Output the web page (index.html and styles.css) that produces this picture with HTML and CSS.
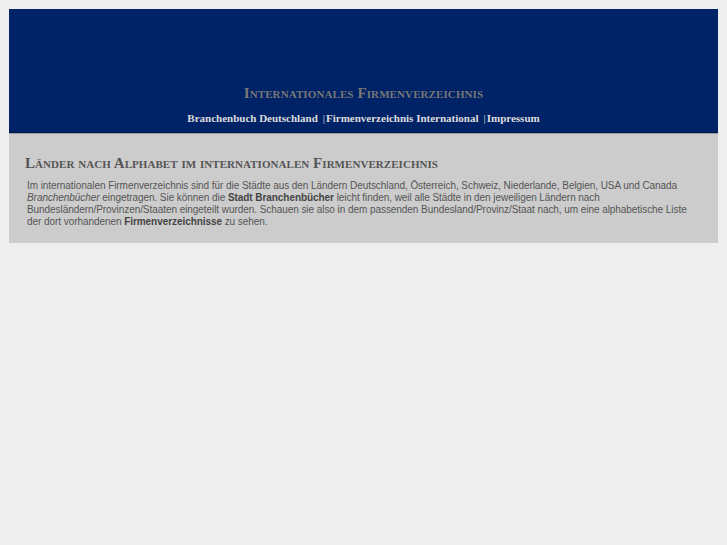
FILE: index.html
```html
<!DOCTYPE html>
<html lang="de">
<head>
<meta charset="utf-8">
<title>Internationales Firmenverzeichnis</title>
<link rel="stylesheet" href="styles.css">
</head>
<body>
<div class="page">
  <header class="header">
    <h1 class="site-title">Internationales Firmenverzeichnis</h1>
    <nav class="nav">
      <a href="#">Branchenbuch Deutschland</a><span class="sep">|</span><a href="#">Firmenverzeichnis International</a><span class="sep">|</span><a href="#">Impressum</a>
    </nav>
  </header>
  <main class="content">
    <h2 class="heading">Länder nach Alphabet im internationalen Firmenverzeichnis</h2>
    <p class="text">Im internationalen Firmenverzeichnis sind für die Städte aus den Ländern Deutschland, Österreich, Schweiz, Niederlande, Belgien, USA und Canada <em>Branchenbücher</em> eingetragen. Sie können die <strong>Stadt Branchenbücher</strong> leicht finden, weil alle Städte in den jeweiligen Ländern nach Bundesländern/Provinzen/Staaten eingeteilt wurden. Schauen sie also in dem passenden Bundesland/Provinz/Staat nach, um eine alphabetische Liste der dort vorhandenen <strong>Firmenverzeichnisse</strong> zu sehen.</p>
  </main>
</div>
</body>
</html>
```

FILE: styles.css
```css
html, body {
  margin: 0;
  padding: 0;
}
body {
  background: #eeeeee;
  padding: 9px;
}
.page {
  width: 709px;
}
.header {
  background: #002266;
  height: 123px;
  border-bottom: 1px solid #001540;
  display: flex;
  flex-direction: column;
  align-items: center;
  justify-content: flex-end;
}
.site-title {
  margin: 0 0 9px 0;
  font-family: "Liberation Serif", "Times New Roman", serif;
  font-variant: small-caps;
  font-weight: bold;
  font-size: 15px;
  color: #777777;
  line-height: 18px;
  letter-spacing: 0.1px;
}
.nav {
  font-family: "Liberation Serif", "Times New Roman", serif;
  font-weight: bold;
  font-size: 11px;
  line-height: 14px;
  color: #dddddd;
  margin-bottom: 7px;
}
.nav a {
  color: #dddddd;
  text-decoration: none;
}
.nav .sep {
  margin: 0 1px 0 5px;
  font-weight: normal;
}
.content {
  background: #cccccc;
  border-top: 1px solid #9a9aa8;
  padding: 20px 18px 15px 16px;
}
.heading {
  margin: 0 0 8px 0;
  font-family: "Liberation Serif", "Times New Roman", serif;
  font-variant: small-caps;
  font-weight: bold;
  font-size: 15px;
  line-height: 18px;
  color: #555555;
  letter-spacing: 0.05px;
}
.text {
  margin: 0 0 0 2px;
  font-family: "Liberation Sans", Arial, sans-serif;
  font-size: 10px;
  line-height: 12px;
  letter-spacing: -0.06px;
  color: #555555;
}
.text strong {
  color: #444444;
}
```
